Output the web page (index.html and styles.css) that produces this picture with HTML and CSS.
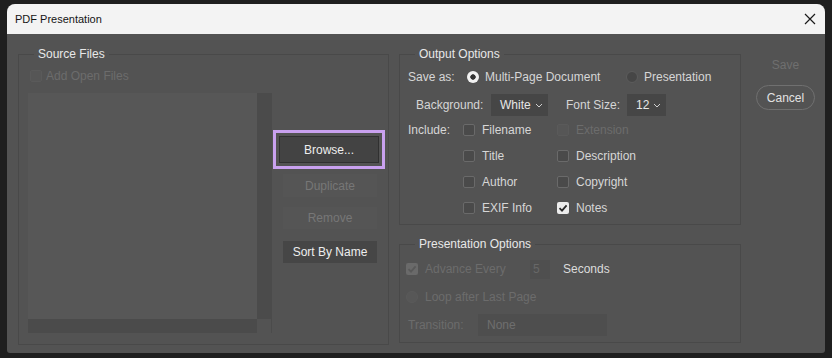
FILE: index.html
```html
<!DOCTYPE html>
<html lang="en">
<head>
    <meta charset="UTF-8">
    <meta name="viewport" content="width=device-width, initial-scale=1.0">
    <title>PDF Presentation</title>
    <link rel="stylesheet" href="styles.css">
</head>
<body>
    <div class="window">
        <div class="titlebar">
            <span class="title">PDF Presentation</span>
            <svg class="close" width="12" height="12" viewBox="0 0 12 12"><path d="M1 1L11 11M11 1L1 11" stroke="#1a1a1a" stroke-width="1.2" fill="none"/></svg>
        </div>

        <div class="dialog-body">
            <fieldset class="group source">
                <legend>Source Files</legend>
                <div class="row add-open disabled"><span class="cb faint"></span>Add Open Files</div>
                <div class="source-main">
                    <div class="file-list">
                        <div class="list-area">
                            <div class="list-view"></div>
                            <div class="vscroll"></div>
                        </div>
                        <div class="list-bottom">
                            <div class="hscroll"></div>
                            <div class="corner"></div>
                        </div>
                    </div>
                    <div class="file-buttons">
                        <div class="focus-ring"><button class="btn strong">Browse...</button></div>
                        <button class="btn off dup">Duplicate</button>
                        <button class="btn off rem">Remove</button>
                        <button class="btn sort">Sort By Name</button>
                    </div>
                </div>
            </fieldset>

            <div class="options">
                <fieldset class="group output">
                    <legend>Output Options</legend>
                    <div class="row save-row">
                        <span class="lbl">Save as:</span>
                        <span class="radio-opt first"><span class="radio on"></span>Multi-Page Document</span>
                        <span class="radio-opt"><span class="radio"></span>Presentation</span>
                    </div>
                    <div class="row bg-row">
                        <span class="lbl bg-lbl">Background:</span>
                        <span class="select bg-select">White <svg width="8" height="5" viewBox="0 0 8 5"><path d="M1 1L4 4L7 1" stroke="#cfcfcf" fill="none"/></svg></span>
                        <span class="lbl size-lbl">Font Size:</span>
                        <span class="select size-select">12 <svg width="8" height="5" viewBox="0 0 8 5"><path d="M1 1L4 4L7 1" stroke="#cfcfcf" fill="none"/></svg></span>
                    </div>
                    <div class="row inc-row top">
                        <span class="lbl inc-lbl">Include:</span>
                        <span class="check"><span class="cb"></span>Filename</span>
                        <span class="check disabled"><span class="cb faint"></span>Extension</span>
                    </div>
                    <div class="row inc-row">
                        <span class="lbl inc-lbl"></span>
                        <span class="check"><span class="cb"></span>Title</span>
                        <span class="check"><span class="cb"></span>Description</span>
                    </div>
                    <div class="row inc-row">
                        <span class="lbl inc-lbl"></span>
                        <span class="check"><span class="cb"></span>Author</span>
                        <span class="check"><span class="cb"></span>Copyright</span>
                    </div>
                    <div class="row inc-row">
                        <span class="lbl inc-lbl"></span>
                        <span class="check"><span class="cb"></span>EXIF Info</span>
                        <span class="check"><span class="cb on"><svg width="12" height="12" viewBox="0 0 12 12"><path d="M2.5 6.2L5 8.6L9.6 3.4" stroke="#2a2a2a" stroke-width="1.8" fill="none"/></svg></span>Notes</span>
                    </div>
                </fieldset>

                <fieldset class="group presentation">
                    <legend>Presentation Options</legend>
                    <div class="row pres-row adv">
                        <span class="cb dim"><svg width="12" height="12" viewBox="0 0 12 12"><path d="M2.5 6.2L5 8.6L9.6 3.4" stroke="#595959" stroke-width="1.8" fill="none"/></svg></span>
                        <span class="disabled adv-lbl">Advance Every</span>
                        <span class="num-box">5</span>
                        <span class="secs">Seconds</span>
                    </div>
                    <div class="row pres-row loop">
                        <span class="radio faint"></span>
                        <span class="disabled">Loop after Last Page</span>
                    </div>
                    <div class="row pres-row trans">
                        <span class="lbl disabled trans-lbl">Transition:</span>
                        <span class="text-box">None</span>
                    </div>
                </fieldset>
            </div>

            <div class="actions">
                <span class="save">Save</span>
                <button class="cancel">Cancel</button>
            </div>
        </div>
    </div>
</body>
</html>
```

FILE: styles.css
```css
body {
    margin: 0;
    background: #1f1f1f;
    font-family: "Liberation Sans", Arial, sans-serif;
    font-size: 12px;
    line-height: 16px;
    color: #d6d6d6;
}
.window {
    margin: 4px 0 0 7px;
    width: 818px;
    height: 349px;
    background: #535353;
    border-radius: 8px 8px 3px 3px;
    overflow: hidden;
}
.titlebar {
    height: 30px;
    background: #f3f3f3;
    color: #141414;
    font-size: 11px;
    display: flex;
    align-items: center;
    justify-content: space-between;
    padding: 0 9px 0 8px;
}
.dialog-body {
    display: flex;
    align-items: flex-start;
    padding: 12px 0 0 11px;
}
.group {
    margin: 0;
    padding: 0;
    min-width: 0;
    border: 1px solid #494949;
    box-sizing: border-box;
}
.group legend {
    margin-left: 15px;
    padding: 0 4px;
    color: #e8e8e8;
    line-height: 16px;
}
.row {
    display: flex;
    align-items: center;
    height: 16px;
    white-space: nowrap;
}
.disabled {
    color: #6c6c6c;
}
.lbl {
    flex: none;
}

/* checkboxes and radios */
.cb {
    flex: none;
    width: 12px;
    height: 12px;
    box-sizing: border-box;
    border: 1px solid #6a6a6a;
    background: #4a4a4a;
    border-radius: 2px;
    display: flex;
}
.cb.faint {
    border-color: #5a5a5a;
    background: #565656;
}
.cb.on {
    border: none;
    background: #ececec;
}
.cb.dim {
    border: none;
    background: #6a6a6a;
}
.radio {
    flex: none;
    width: 12px;
    height: 12px;
    box-sizing: border-box;
    border-radius: 50%;
    background: #464646;
    border: 1px solid #5c5c5c;
}
.radio.on {
    border: none;
    background: radial-gradient(circle, #333 0 2.4px, #f2f2f2 3px);
}
.radio.faint {
    background: #575757;
    border-color: #5a5a5a;
}

/* source files */
.source {
    width: 371px;
    height: 299px;
}
.add-open {
    margin: 6px 0 0 11px;
    gap: 4px;
}
.source-main {
    display: flex;
    margin: 9px 0 0 9px;
}
.file-list {
    width: 244px;
}
.list-area {
    display: flex;
    height: 226px;
}
.list-view {
    flex: 1;
    background: #575757;
}
.vscroll {
    width: 15px;
    background: #4b4b4b;
}
.list-bottom {
    display: flex;
    height: 14px;
}
.hscroll {
    flex: 1;
    background: #4b4b4b;
}
.corner {
    width: 14px;
    border-right: 1px solid #4b4b4b;
}
.file-buttons {
    margin-left: 1px;
    width: 112px;
    display: flex;
    flex-direction: column;
}
.focus-ring {
    margin-top: 37px;
    border: 3px solid #c9a1ef;
    padding: 3px;
}
.btn {
    display: block;
    font: inherit;
    padding: 0;
    border: none;
    height: 22px;
    width: 94px;
    margin-left: 10px;
    background: #464646;
    color: #eeeeee;
}
.btn.strong {
    margin: 0;
    width: 100px;
    height: 27px;
    background: #434343;
    border: 1px solid #303030;
}
.btn.off {
    background: #555555;
    color: #777777;
}
.dup {
    margin-top: 5px;
    height: 23px;
}
.rem {
    margin-top: 10px;
}
.sort {
    margin-top: 12px;
}

/* output options */
.options {
    margin-left: 10px;
    width: 342px;
}
.output {
    padding-bottom: 8px;
}
.save-row {
    margin-top: 7px;
    padding-left: 8px;
}
.save-row .lbl {
    width: 59px;
}
.radio-opt {
    display: flex;
    align-items: center;
    gap: 6px;
}
.radio-opt.first {
    width: 159px;
}
.bg-row {
    margin-top: 9px;
    height: 22px;
    padding-left: 16px;
}
.bg-lbl {
    width: 75px;
}
.size-lbl {
    width: 61px;
    margin-left: 18px;
}
.select {
    height: 22px;
    box-sizing: border-box;
    background: #464646;
    color: #e6e6e6;
    display: flex;
    align-items: center;
    justify-content: space-between;
    padding: 0 5px 0 9px;
}
.bg-select {
    width: 57px;
}
.size-select {
    width: 39px;
}
.inc-row {
    margin-top: 10px;
    padding-left: 8px;
}
.inc-row.top {
    margin-top: 6px;
}
.inc-lbl {
    width: 55px;
}
.check {
    display: flex;
    align-items: center;
    gap: 7px;
    width: 94px;
}

/* presentation options */
.presentation {
    margin-top: 11px;
    padding-bottom: 6px;
}
.pres-row {
    padding-left: 6px;
}
.pres-row .cb,
.pres-row .radio {
    margin-right: 7px;
}
.adv {
    margin-top: 7px;
    height: 20px;
}
.adv-lbl {
    width: 105px;
}
.num-box {
    width: 20px;
    height: 19px;
    box-sizing: border-box;
    padding-left: 3px;
    background: #4f4f4f;
    color: #676767;
    line-height: 19px;
}
.secs {
    margin-left: 13px;
    color: #dcdcdc;
}
.loop {
    margin-top: 10px;
}
.trans {
    margin-top: 9px;
    height: 22px;
    padding-left: 8px;
}
.trans-lbl {
    width: 70px;
}
.text-box {
    width: 129px;
    height: 22px;
    line-height: 22px;
    box-sizing: border-box;
    padding-left: 9px;
    background: #4e4e4e;
    color: #6e6e6e;
}

/* dialog actions */
.actions {
    margin-left: 15px;
    width: 59px;
    display: flex;
    flex-direction: column;
}
.save {
    margin-top: 11px;
    text-align: center;
    color: #6f6f6f;
}
.cancel {
    margin-top: 12px;
    height: 25px;
    padding: 0;
    font: inherit;
    background: transparent;
    color: #e2e2e2;
    border: 1px solid #707070;
    border-radius: 13px;
}
```
